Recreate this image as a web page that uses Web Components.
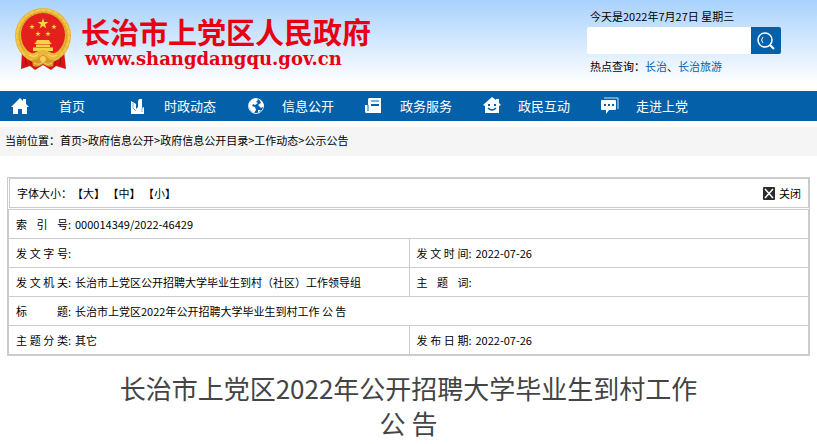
<!DOCTYPE html>
<html lang="zh-CN">
<head>
<meta charset="utf-8">
<meta name="viewport" content="width=device-width, initial-scale=1">
<title>长治市上党区人民政府</title>
<style>
  body {
    margin: 0;
    background: #fff;
    color: #000;
    font: 11px/16px "Noto Sans CJK SC", sans-serif;
    --blue: #0460a9;
    --line: #ccc;
  }
</style>
</head>
<body>
<site-header>
  <site-search slot="tools"></site-search>
</site-header>

<site-nav>
  <nav-item icon="home">首页</nav-item>
  <nav-item icon="news">时政动态</nav-item>
  <nav-item icon="globe">信息公开</nav-item>
  <nav-item icon="paper">政务服务</nav-item>
  <nav-item icon="smile">政民互动</nav-item>
  <nav-item icon="chat">走进上党</nav-item>
</site-nav>

<bread-crumb path="首页,政府信息公开,政府信息公开目录,工作动态,公示公告"></bread-crumb>

<main>
  <doc-info></doc-info>
  <doc-title>长治市上党区2022年公开招聘大学毕业生到村工作 公 告</doc-title>
</main>

<script>
// Header with emblem and site name
const headerTemplate = document.createElement("template");
headerTemplate.innerHTML = `
  <style>
    :host {
      display: flex;
      justify-content: space-between;
      height: 91px;
      padding: 0 36px 0 13px;
      background: linear-gradient(#a8d2fd, #fff 92%);
    }

    .brand {
      display: flex;
      align-items: center;
      gap: 8px;
      height: 76px;
      color: #e60012;
      text-decoration: none;
    }

    .brand svg {
      width: 60px;
      height: 64px;
    }

    .words {
      display: grid;
      gap: 2px;
      padding-top: 8px;
    }

    .name {
      font-size: 29px;
      line-height: 32px;
      font-weight: 700;
    }

    .url {
      padding-left: 4px;
      font: 700 18px/20px "DejaVu Serif", serif;
    }
  </style>

  <a class="brand" href="#">
    <svg viewBox="0 0 60 64" aria-hidden="true">
      <path d="M9 45 L8 63 L17 60 L22 64 L30 59 L38 64 L43 60 L53 63 L51 45Z" fill="#d71414"/>
      <path d="M12 48 L13 59 M18 50 L18 59 M42 50 L42 59 M48 48 L47 59" stroke="#8f1010" stroke-width="1" fill="none"/>
      <circle cx="30" cy="30" r="28" fill="#e8b432"/>
      <circle cx="30" cy="30" r="26" fill="none" stroke="#f2c94e" stroke-width="2" stroke-dasharray="5 1"/>
      <circle cx="30" cy="30" r="23.500" fill="none" stroke="#d99a2a" stroke-width="1" stroke-dasharray="3 1"/>
      <circle cx="30" cy="29" r="22" fill="#e3201b"/>
      <g fill="#f8d247">
        <path d="M30 12 L31.300 16 L35.500 16 L32.100 18.500 L33.400 22.500 L30 20 L26.600 22.500 L27.900 18.500 L24.500 16 L28.700 16Z"/>
        <path d="M19 18l.7 2h2.100l-1.700 1.200.6 2-1.700-1.200-1.700 1.200.6-2-1.700-1.200h2.100z"/>
        <path d="M41 18l.7 2h2.100l-1.700 1.200.6 2-1.700-1.200-1.700 1.200.6-2-1.700-1.200h2.100z"/>
        <path d="M25 25l.7 2h2.100l-1.700 1.200.6 2-1.700-1.200-1.700 1.200.6-2-1.700-1.200h2.100z"/>
        <path d="M35 25l.7 2h2.100l-1.700 1.200.6 2-1.700-1.200-1.700 1.200.6-2-1.700-1.200h2.100z"/>
        <path d="M23 36 L24 34 H36 L37 36 L39 38 H21Z M23 38.500 H37 V41 H23Z M20 41.500 H40 V45 H20Z"/>
      </g>
      <path d="M11 44 Q20 49 23 46 Q30 42 37 46 Q40 49 49 44 L46 53 Q38 56 34 51 Q30 48 26 51 Q22 56 14 53Z" fill="#edb83a"/>
      <path d="M16 49 Q22 52 25 48 M44 49 Q38 52 35 48" stroke="#fbe27a" stroke-width="1" fill="none"/>
      <path d="M19 54 Q24 54 26 51 Q30 48 34 51 Q36 54 41 54 L40 60 Q35 62 30 58 Q25 62 20 60Z" fill="#d89a2c"/>
      <circle cx="30" cy="53" r="3" fill="#f5d055"/>
      <path d="M21 57 Q26 60 30 56 Q34 60 39 57" stroke="#f7d35d" stroke-width="1" fill="none"/>
    </svg>
    <span class="words">
      <span class="name">长治市上党区人民政府</span>
      <span class="url">www.shangdangqu.gov.cn</span>
    </span>
  </a>
  <slot name="tools"></slot>
`;

class SiteHeader extends HTMLElement {
  constructor() {
    super();
    this.attachShadow({ mode: "open" });
    this.shadowRoot.appendChild(headerTemplate.content.cloneNode(true));
  }
}

customElements.define("site-header", SiteHeader);

// Date, search box and popular queries
const searchTemplate = document.createElement("template");
searchTemplate.innerHTML = `
  <style>
    :host {
      display: block;
      width: 194px;
      padding-top: 8px;
    }

    p {
      margin: 0;
      padding-left: 3px;
      white-space: nowrap;
    }

    form {
      display: flex;
      height: 27px;
      margin: 3px 0 4px;
      border-radius: 2px;
      overflow: hidden;
    }

    input {
      flex: 1;
      min-width: 0;
      border: 0;
      padding: 0 8px;
      background: #fff;
      font: inherit;
      outline: none;
    }

    button {
      display: grid;
      place-items: center;
      width: 30px;
      padding: 0;
      border: 0;
      background: var(--blue);
      cursor: pointer;
    }

    a {
      color: var(--blue);
      text-decoration: none;
    }
  </style>

  <p>今天是2022年7月27日 星期三</p>
  <form>
    <input type="text" aria-label="搜索">
    <button type="submit" aria-label="搜索">
      <svg width="18" height="18" viewBox="0 0 18 18" fill="none" stroke="#fff">
        <circle cx="8" cy="8" r="7" stroke-width="1.500"/>
        <path d="M13 13 L17 17" stroke-width="2"/>
        <path d="M6 5 Q3 8 6 11" stroke-width="1"/>
      </svg>
    </button>
  </form>
  <p>热点查询：<a href="#">长治</a>、<a href="#">长治旅游</a></p>
`;

class SiteSearch extends HTMLElement {
  constructor() {
    super();
    this.attachShadow({ mode: "open" });
    this.shadowRoot.appendChild(searchTemplate.content.cloneNode(true));
    this.shadowRoot
      .querySelector("form")
      .addEventListener("submit", (e) => e.preventDefault());
  }
}

customElements.define("site-search", SiteSearch);

// Main navigation
const navTemplate = document.createElement("template");
navTemplate.innerHTML = `
  <style>
    :host {
      display: block;
      background: var(--blue);
    }

    nav {
      display: flex;
      gap: 14px;
      height: 30px;
      padding-left: 10px;
    }
  </style>

  <nav><slot></slot></nav>
`;

class SiteNav extends HTMLElement {
  constructor() {
    super();
    this.attachShadow({ mode: "open" });
    this.shadowRoot.appendChild(navTemplate.content.cloneNode(true));
  }
}

customElements.define("site-nav", SiteNav);

const navIcons = {
  home: `
    <path d="M10 2 L13 5 V3 H16 V8 L19 11 H17 V18 H12 V13 H8 V18 H3 V11 H1Z" fill="#fff"/>`,
  news: `
    <path d="M3 5 L8 8 V13 L10 11 V5 L11 3 H14 V12 L16 11 V18 H3Z" fill="#fff"/>
    <path d="M5 7 V12 L8 15" stroke="#7fb0da" fill="none"/>
    <path d="M14 12 V16" stroke="#7fb0da"/>`,
  globe: `
    <circle cx="10" cy="10" r="7.500" fill="#0460a9" stroke="#d7e7f5" stroke-width="1"/>
    <path d="M3 7 Q5 3 10 2 L12 4 L10 6 L12 7 L9 9 L7 8 L6 10 L9 11 L10 14 L8 17 Q2 14 3 7Z" fill="#fff"/>
    <path d="M13 3 Q17 5 18 10 L15 12 L12 9 L15 7Z" fill="#fff"/>
    <path d="M12 14 L15 14 L12 17Z" fill="#fff"/>`,
  paper: `
    <path d="M5 2 H17 V17 H2 Q1 17 1 15 V9 H4 V3Z" fill="#fff"/>
    <path d="M7 5 H15" stroke="#0460a9"/>
    <path d="M7 9 H15" stroke="#0460a9" stroke-width="2"/>
    <path d="M4 9 V15" stroke="#0460a9" fill="none"/>`,
  smile: `
    <path d="M10 1 L14 4 V3 H17 V7 L19 9 L17 10 V17 H3 V10 L1 9Z" fill="#fff"/>
    <path d="M7 8 V10 M13 8 V10" stroke="#0460a9" stroke-width="2"/>
    <path d="M6 12 Q10 16 14 12" stroke="#0460a9" stroke-width="1.500" fill="none"/>`,
  chat: `
    <path d="M4 2 H18 V13" stroke="#cfe2f3" stroke-width="1" fill="none"/>
    <path d="M2 4 H15 Q16 4 16 5 V13 Q16 14 15 14 H9 L6 18 V14 H2 Q1 14 1 13 V5 Q1 4 2 4Z" fill="#fff"/>
    <path d="M4 9 H6 M8 9 H10 M12 9 H14" stroke="#0460a9" stroke-width="2"/>`,
};

class NavItem extends HTMLElement {
  constructor() {
    super();
    this.attachShadow({ mode: "open" });
  }

  connectedCallback() {
    this.shadowRoot.innerHTML = `
      <style>
        :host {
          display: block;
        }

        a {
          display: grid;
          grid-template-columns: 20px 84px;
          align-items: center;
          height: 100%;
          color: #fff;
          font-size: 13px;
          text-align: center;
          text-decoration: none;
        }
      </style>

      <a href="#">
        <svg width="20" height="20" viewBox="0 0 20 20" aria-hidden="true">${navIcons[this.getAttribute("icon")]}</svg>
        <span><slot></slot></span>
      </a>
    `;
  }
}

customElements.define("nav-item", NavItem);

// Breadcrumb
class BreadCrumb extends HTMLElement {
  constructor() {
    super();
    this.attachShadow({ mode: "open" });
  }

  connectedCallback() {
    const links = this.getAttribute("path")
      .split(",")
      .map((name) => `<a href="#">${name}</a>`)
      .join("&gt;");

    this.shadowRoot.innerHTML = `
      <style>
        :host {
          display: block;
          margin-top: 6px;
          padding: 5px 5px 8px;
          background: #f5f5f5;
        }

        a {
          color: inherit;
          text-decoration: none;
        }
      </style>

      <nav>当前位置：${links}</nav>
    `;
  }
}

customElements.define("bread-crumb", BreadCrumb);

// Document details
const infoTemplate = document.createElement("template");
infoTemplate.innerHTML = `
  <style>
    :host {
      display: block;
      margin: 21px 7px 0;
      border: 1px solid var(--line);
    }

    .bar {
      display: flex;
      justify-content: space-between;
      align-items: center;
      height: 28px;
      margin: 0 0 1px 1px;
      padding: 0 7px;
      border: 1px solid var(--line);
    }

    button {
      padding: 0;
      border: 0;
      background: none;
      color: inherit;
      font: inherit;
      cursor: pointer;
    }

    .close {
      display: flex;
      align-items: center;
      gap: 4px;
    }

    table {
      width: 100%;
      table-layout: fixed;
      border-collapse: separate;
      border-spacing: 0;
      border: solid var(--line);
      border-width: 1px 1px 0;
    }

    td {
      height: 28px;
      padding: 0 7px;
      border-bottom: 1px solid var(--line);
    }

    td + td {
      border-left: 1px solid var(--line);
    }

    .field {
      display: flex;
    }

    .label {
      width: 52px;
      text-align: justify;
      text-align-last: justify;
    }

    .label + span {
      width: 7px;
    }
  </style>

  <div class="bar">
    <div>字体大小：<button>【大】</button> <button>【中】</button> <button>【小】</button></div>
    <button class="close">
      <svg width="12" height="13" viewBox="0 0 12 13" aria-hidden="true">
        <rect width="12" height="13" rx="1" fill="#2b2b2b"/>
        <path d="M2 2 L10 11 M10 2 L2 11" stroke="#fff" stroke-width="1.500"/>
      </svg>
      关闭
    </button>
  </div>
  <table><tbody></tbody></table>
`;

const infoRows = [
  [["索引号", "000014349/2022-46429"]],
  [["发文字号", ""], ["发文时间", "2022-07-26"]],
  [["发文机关", "长治市上党区公开招聘大学毕业生到村（社区）工作领导组"], ["主题词", ""]],
  [["标题", "长治市上党区2022年公开招聘大学毕业生到村工作 公 告"]],
  [["主题分类", "其它"], ["发布日期", "2022-07-26"]],
];

class DocInfo extends HTMLElement {
  constructor() {
    super();
    this.attachShadow({ mode: "open" });
    this.shadowRoot.appendChild(infoTemplate.content.cloneNode(true));
    this.tbody = this.shadowRoot.querySelector("tbody");
    this.renderRows();
  }

  renderRows() {
    // a single field takes the full row
    this.tbody.innerHTML = infoRows
      .map((row) => {
        const span = row.length === 1 ? ' colspan="2"' : "";
        const cells = row.map(
          ([label, value]) =>
            `<td${span}><div class="field"><span class="label">${label}</span><span>:</span><span>${value}</span></div></td>`
        );
        return `<tr>${cells.join("")}</tr>`;
      })
      .join("");
  }
}

customElements.define("doc-info", DocInfo);

// Document title
const titleTemplate = document.createElement("template");
titleTemplate.innerHTML = `
  <style>
    :host {
      display: block;
      padding: 14px 14% 0;
    }

    h1 {
      margin: 0;
      color: #444;
      font-size: 26px;
      line-height: 35px;
      font-weight: 400;
      text-align: center;
    }
  </style>

  <h1><slot></slot></h1>
`;

class DocTitle extends HTMLElement {
  constructor() {
    super();
    this.attachShadow({ mode: "open" });
    this.shadowRoot.appendChild(titleTemplate.content.cloneNode(true));
  }
}

customElements.define("doc-title", DocTitle);
</script>
</body>
</html>
